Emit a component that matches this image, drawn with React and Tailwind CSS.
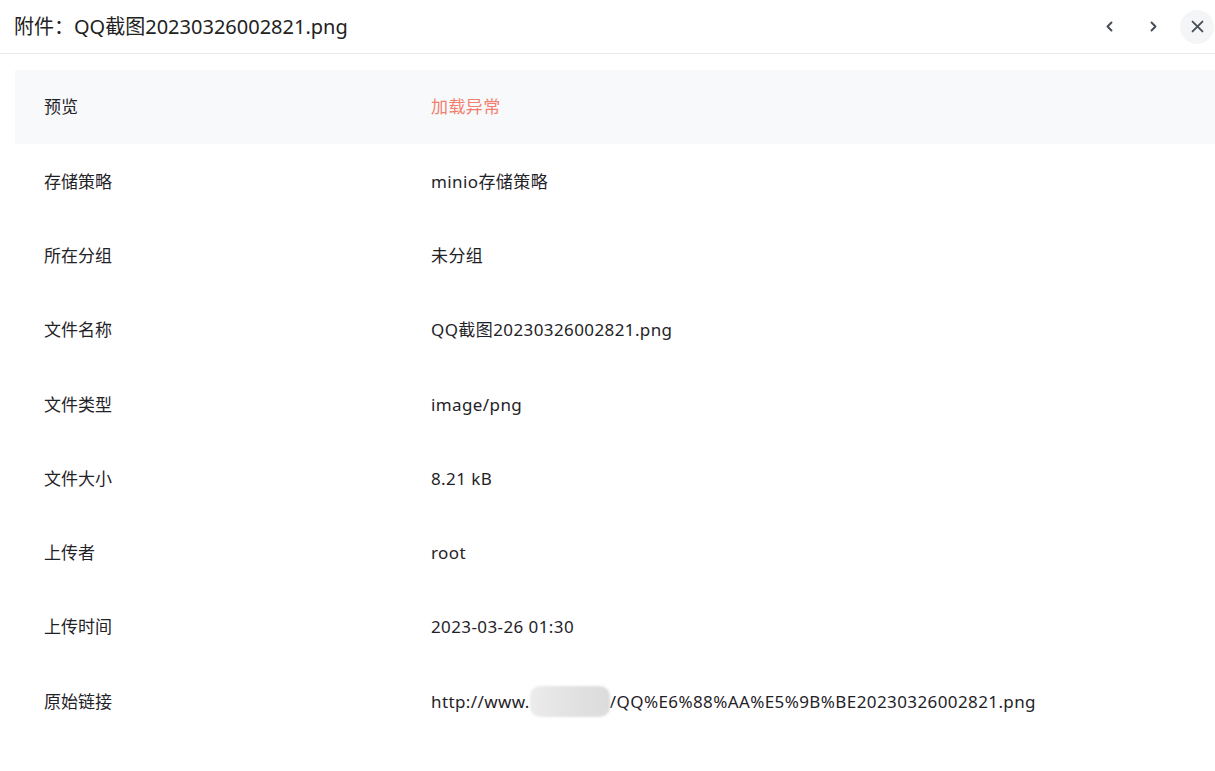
import React from "react";

const rows = [
  { label: "预览", value: "加载异常", danger: true },
  { label: "存储策略", value: "minio存储策略" },
  { label: "所在分组", value: "未分组" },
  { label: "文件名称", value: "QQ截图20230326002821.png" },
  { label: "文件类型", value: "image/png" },
  { label: "文件大小", value: "8.21 kB" },
  { label: "上传者", value: "root" },
  { label: "上传时间", value: "2023-03-26 01:30" },
  { label: "原始链接", link: true },
];

function Chevron({ dir }) {
  return (
    <svg width="19" height="19" viewBox="0 0 24 24" fill="none" stroke="currentColor" strokeWidth="2.5" strokeLinecap="round" strokeLinejoin="round">
      {dir === "left" ? <path d="M14.5 17l-5-5 5-5" /> : <path d="M9.5 17l5-5-5-5" />}
    </svg>
  );
}

export default function App() {
  return (
    <div
      className="w-[1215px] h-[771px] bg-white overflow-hidden text-[#1f2328]"
      style={{ fontFamily: '"Noto Sans", "Noto Sans CJK SC", sans-serif' }}
    >
      <div className="h-[54px] flex items-center justify-between pl-[14px] pr-[1px] border-b border-[#e8e8ea]">
        <div className="text-[20px] text-[#222]">附件：QQ截图20230326002821.png</div>
        <div className="flex items-center gap-[10px] text-[#474d57]">
          <button className="w-[34px] h-[34px] flex items-center justify-center rounded-full">
            <Chevron dir="left" />
          </button>
          <button className="w-[34px] h-[34px] flex items-center justify-center rounded-full">
            <Chevron dir="right" />
          </button>
          <button className="w-[34px] h-[34px] flex items-center justify-center rounded-full bg-[#f4f5f7]">
            <svg width="17" height="17" viewBox="0 0 24 24" fill="none" stroke="currentColor" strokeWidth="2.6" strokeLinecap="round">
              <path d="M5 5l14 14M19 5L5 19" />
            </svg>
          </button>
        </div>
      </div>
      <div className="pl-[15px] pt-[16px]">
        {rows.map((r, i) => (
          <div
            key={r.label}
            className={`flex items-center h-[74.3px] text-[17px] ${i === 0 ? "bg-[#f8f9fb]" : ""}`}
          >
            <div className="w-[416px] pl-[29px] text-[#1f2328]">{r.label}</div>
            <div className={`tracking-[0.4px] ${r.danger ? "text-[#f2806f]" : "text-[#1f2328]"}`}>
              {r.link ? (
                <span className="flex items-center">
                  http://www.
                  <span className="inline-block w-[80px] h-[31px] rounded-[10px] bg-gradient-to-r from-[#ececec] via-[#e2e2e2] to-[#dcdcdc] blur-[1px]" />
                  /QQ%E6%88%AA%E5%9B%BE20230326002821.png
                </span>
              ) : (
                r.value
              )}
            </div>
          </div>
        ))}
      </div>
    </div>
  );
}
